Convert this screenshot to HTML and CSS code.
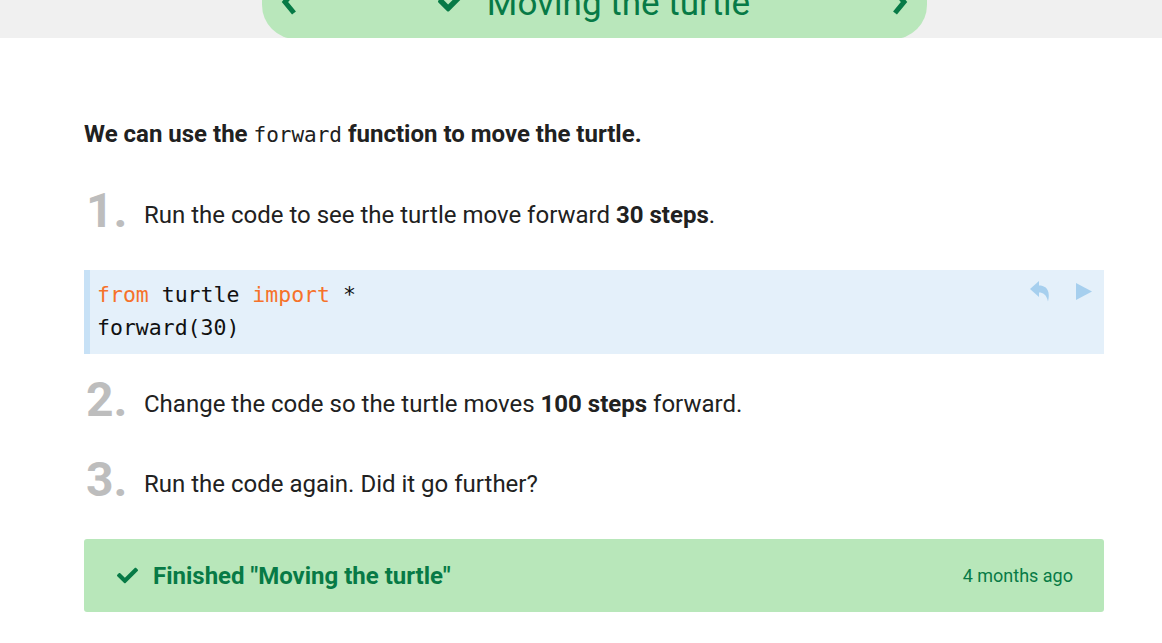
FILE: index.html
```html
<!DOCTYPE html>
<html lang="en">
<head>
<meta charset="utf-8">
<title>Moving the turtle</title>
<link rel="stylesheet" href="styles.css">
</head>
<body>
<header class="topbar">
  <div class="topinner">
    <div class="pill">
      <svg class="chev" viewBox="0 0 16 26" width="16" height="26"><path d="M13 2 L4 13 L13 24" fill="none" stroke="#077a46" stroke-width="5" stroke-linejoin="miter"/></svg>
      <div class="title">
        <svg class="tcheck" viewBox="0 0 512 512" width="27" height="27"><path fill="#077a46" d="M173.9 439.4l-166.4-166.4c-10-10-10-26.2 0-36.2l36.2-36.2c10-10 26.2-10 36.2 0L192 312.7 432.1 72.6c10-10 26.2-10 36.2 0l36.2 36.2c10 10 10 26.2 0 36.2l-294.4 294.4c-10 10-26.2 10-36.2 0z"/></svg>
        <span>Moving the turtle</span>
      </div>
      <svg class="chev" viewBox="0 0 16 26" width="16" height="26"><path d="M3 2 L12 13 L3 24" fill="none" stroke="#077a46" stroke-width="5" stroke-linejoin="miter"/></svg>
    </div>
  </div>
</header>
<main class="content">
  <p class="lead">We can use the <code>forward</code> function to move the turtle.</p>
  <div class="step step1">
    <span class="num">1.</span>
    <span class="text">Run the code to see the turtle move forward <b>30 steps</b>.</span>
  </div>
  <div class="code">
    <pre><span class="kw">from</span> turtle <span class="kw">import</span> *
forward(30)</pre>
    <div class="tools">
      <svg viewBox="0 0 20 22" width="20" height="22"><path fill="#a6cfee" d="M0 9 L9 1 L9 5.5 C15 5.5 21 9 18 21.5 C16.5 14.5 13 12.5 9 12.5 L9 17 Z"/></svg>
      <svg viewBox="0 0 16 17" width="16" height="17"><path fill="#a6cfee" d="M0 0 L16 8.5 L0 17 Z"/></svg>
    </div>
  </div>
  <div class="step step2">
    <span class="num">2.</span>
    <span class="text">Change the code so the turtle moves <b>100 steps</b> forward.</span>
  </div>
  <div class="step step3">
    <span class="num">3.</span>
    <span class="text">Run the code again. Did it go further?</span>
  </div>
  <div class="done">
    <svg class="dcheck" viewBox="0 0 512 512" width="21" height="21"><path fill="#077a46" d="M173.9 439.4l-166.4-166.4c-10-10-10-26.2 0-36.2l36.2-36.2c10-10 26.2-10 36.2 0L192 312.7 432.1 72.6c10-10 26.2-10 36.2 0l36.2 36.2c10 10 10 26.2 0 36.2l-294.4 294.4c-10 10-26.2 10-36.2 0z"/></svg>
    <span class="dtext">Finished "Moving the turtle"</span>
    <span class="ago">4 months ago</span>
  </div>
</main>
</body>
</html>
```

FILE: styles.css
```css
html, body {
  margin: 0;
  padding: 0;
  background: #ffffff;
  font-family: Roboto, "Liberation Sans", sans-serif;
  color: #212121;
}

.topbar {
  height: 38px;
  background: #f0f0f0;
  overflow: hidden;
}

.topinner {
  width: 1020px;
  margin-left: 84px;
  display: flex;
  justify-content: center;
}

.pill {
  width: 665px;
  height: 77px;
  margin-top: -38px;
  flex: none;
  background: #b9e7bb;
  border-radius: 0 0 34px 34px;
  display: flex;
  align-items: center;
  justify-content: space-between;
  padding: 6px 19px 0 19px;
  box-sizing: border-box;
}

.title {
  display: flex;
  align-items: center;
  gap: 22px;
  color: #077a46;
  font-size: 35px;
  line-height: 40px;
}

.tcheck {
  display: block;
  margin-top: -4px;
}

.chev {
  display: block;
  margin-top: -4px;
}

.content {
  width: 1020px;
  margin-left: 84px;
  padding-top: 79px;
  padding-bottom: 20px;
}

.lead {
  margin: 0;
  font-size: 24px;
  line-height: 34px;
  font-weight: 700;
}

.lead code {
  font-family: "DejaVu Sans Mono", "Liberation Mono", monospace;
  font-weight: 400;
  font-size: 21px;
}

.step {
  display: flex;
  align-items: center;
  height: 60px;
}

.step1 { margin-top: 29px; }
.step2 { margin-top: 16px; }
.step3 { margin-top: 20px; }

.num {
  width: 60px;
  flex: none;
  font-size: 48px;
  font-weight: 700;
  color: #bdbdbd;
  line-height: 1;
  padding-left: 2px;
  box-sizing: border-box;
}

.text {
  font-size: 24px;
  line-height: 34px;
  margin-top: 7px;
}

.text b {
  font-weight: 700;
}

.code {
  margin-top: 29px;
  height: 84px;
  box-sizing: border-box;
  background: #e4f0fa;
  border-left: 6px solid #c7e1f6;
  display: flex;
  justify-content: space-between;
  align-items: flex-start;
}

.code pre {
  margin: 0;
  padding: 8px 0 0 7px;
  font-family: "DejaVu Sans Mono", "Liberation Mono", monospace;
  font-size: 21.5px;
  line-height: 33px;
  color: #111111;
}

.kw {
  color: #f6722a;
}

.tools {
  display: flex;
  gap: 26px;
  align-items: flex-start;
  padding: 10px 12px 0 0;
}

.tools svg {
  display: block;
}

.tools svg:last-child {
  margin-top: 3px;
}

.done {
  margin-top: 29px;
  height: 73px;
  box-sizing: border-box;
  background: #b8e7ba;
  border-radius: 3px;
  display: flex;
  align-items: center;
  padding: 0 31px 0 33px;
  color: #077a46;
}

.dcheck {
  display: block;
  flex: none;
}

.dtext {
  margin-left: 15px;
  font-size: 24px;
  font-weight: 700;
  flex: 1;
}

.ago {
  font-size: 18px;
}
```
